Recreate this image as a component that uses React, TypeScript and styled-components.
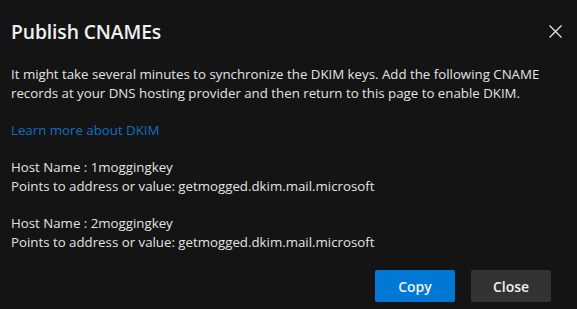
import React from "react";
import styled, { createGlobalStyle } from "styled-components";

const Global = createGlobalStyle`
  html, body { margin: 0; padding: 0; background: #141414; }
  body { font-family: "Open Sans", "Noto Sans", sans-serif; }
`;

const Dialog = styled.div`
  width: 577px;
  height: 309px;
  box-sizing: border-box;
  background: #141414;
  color: #e3e3e3;
  padding: 16px 26px 7px 11px;
  display: flex;
  flex-direction: column;
`;

const Header = styled.div`
  display: flex;
  align-items: center;
  justify-content: space-between;
  height: 30px;
  margin-right: -12px;
`;

const Title = styled.h1`
  margin: 0;
  font-size: 19.3px;
  font-weight: 600;
  color: #f0f0f0;
  letter-spacing: -0.1px;
`;

const CloseIcon = styled.button`
  background: none;
  border: none;
  padding: 0;
  width: 16px;
  height: 16px;
  display: flex;
  align-items: center;
  justify-content: center;
  color: #e6e6e6;
`;

const Body = styled.div`
  flex: 1;
  font-size: 13.27px;
  line-height: 19px;
  padding-top: 19px;
`;

const Para = styled.p<{ $gap?: number }>`
  margin: 0 0 ${(p) => p.$gap ?? 18}px 0;
`;

const Link = styled.a`
  color: #1170c2;
  text-decoration: none;
`;

const Footer = styled.div`
  display: flex;
  justify-content: flex-end;
  gap: 16px;
`;

const Button = styled.button<{ $primary?: boolean }>`
  width: 80px;
  height: 32px;
  border: none;
  border-radius: 2px;
  font-family: inherit;
  font-size: 14px;
  font-weight: 600;
  color: #f0f0f0;
  background: ${(p) => (p.$primary ? "#0078d4" : "#333333")};
`;

export default function App() {
  return (
    <>
      <Global />
      <Dialog>
        <Header>
          <Title>Publish CNAMEs</Title>
          <CloseIcon aria-label="Close">
            <svg width="13" height="13" viewBox="0 0 13 13">
              <path d="M0.5 0.5 L12.5 12.5 M12.5 0.5 L0.5 12.5" stroke="currentColor" strokeWidth="1.3" />
            </svg>
          </CloseIcon>
        </Header>
        <Body>
          <Para>
            It might take several minutes to synchronize the DKIM keys. Add the following CNAME records at your DNS hosting provider and then return to this page to enable DKIM.
          </Para>
          <Para>
            <Link href="#">Learn more about DKIM</Link>
          </Para>
          <Para>
            Host Name : 1moggingkey
            <br />
            Points to address or value: getmogged.dkim.mail.microsoft
          </Para>
          <Para $gap={0}>
            Host Name : 2moggingkey
            <br />
            Points to address or value: getmogged.dkim.mail.microsoft
          </Para>
        </Body>
        <Footer>
          <Button $primary>Copy</Button>
          <Button>Close</Button>
        </Footer>
      </Dialog>
    </>
  );
}
